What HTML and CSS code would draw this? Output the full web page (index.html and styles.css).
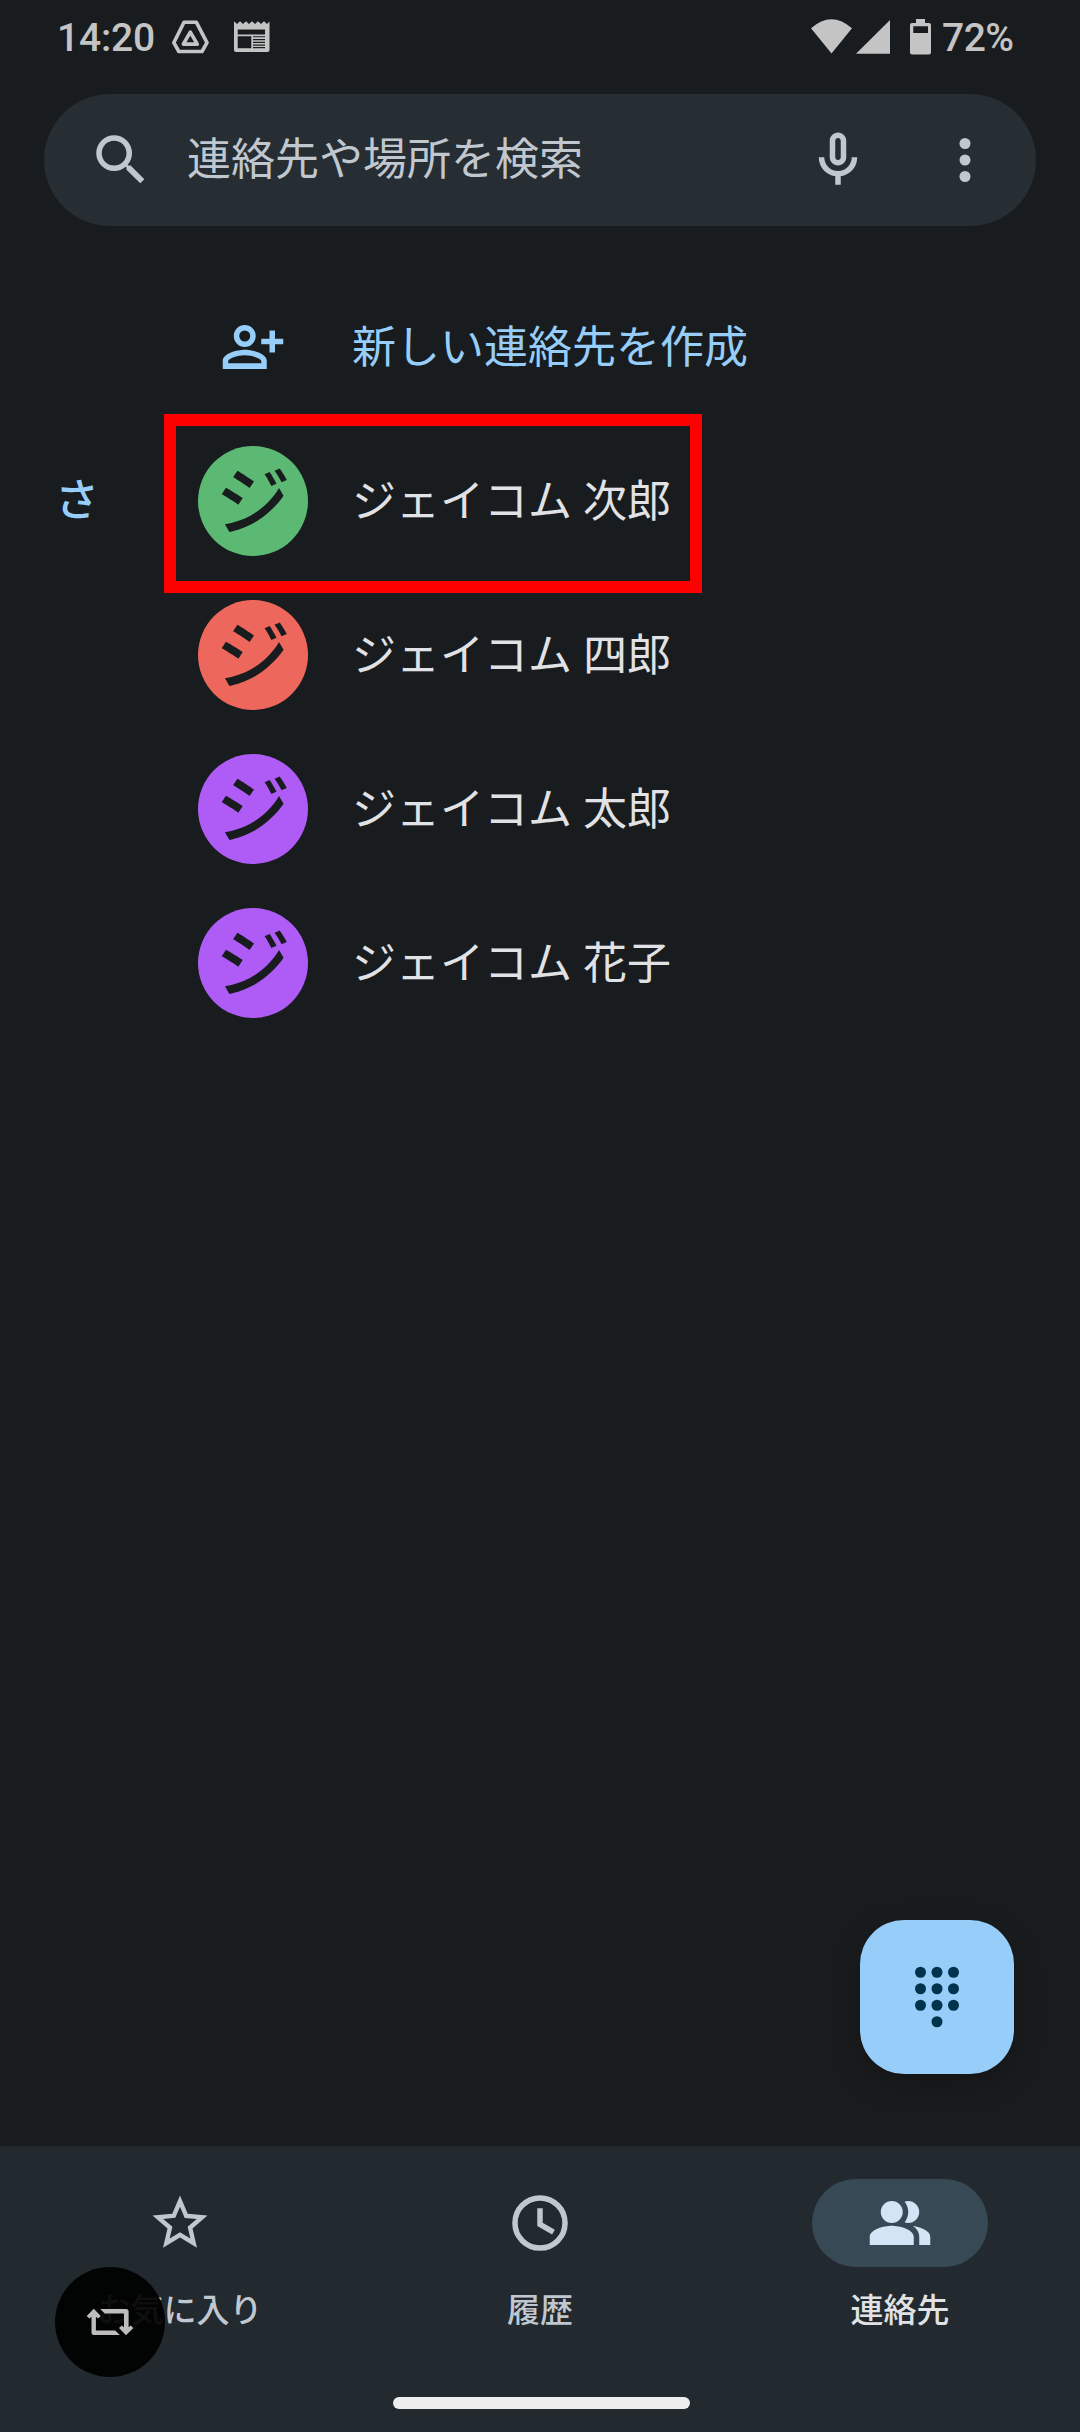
FILE: index.html
```html
<!DOCTYPE html>
<html lang="ja">
<head>
<meta charset="utf-8">
<title>連絡先</title>
<link rel="stylesheet" href="styles.css">
</head>
<body>
<div class="screen">
  <header class="status">
    <span class="clock">14:20</span>
    <svg class="drive" width="38" height="34" viewBox="171 19.5 38 34" fill="none" stroke="currentColor" stroke-width="3.6" stroke-linejoin="round"><path d="M184 21.8h12.4L207 42.2l-5 8.8h-23.2l-5-8.8z"/><path d="M190.3 31.6l7 12h-14z"/></svg>
    <svg class="news" width="36" height="32" viewBox="234 21 36 32"><path fill="currentColor" fill-rule="evenodd" d="M234 21.2l3 2.8 3-2.8 3 2.8 3-2.8 3 2.8 3-2.8 3 2.8 3-2.8 3 2.8 3-2.8 3 2.8 2.500-2.600V50q0 2-2 2h-31.500q-2 0-2-2zM237.700 29.500v5h27.300v-5zM237.700 36.200v12.100h13.600V36.200zM253 36.200v1.100h12v-1.100zM253 38.900v1.300h12v-1.300zM253 41.700v1.300h12v-1.300zM253 44.400v1.300h12v-1.300zM253 47.100v1.200h12v-1.200z"/></svg>
    <svg class="signals" width="122" height="38" viewBox="810 17 122 38" fill="currentColor"><path d="M811 27.300q20.400-18 41 0L831.500 52.500z"/><path d="M856 52.800h34V19z"/><path fill-rule="evenodd" d="M916 18h9v4h4q2 0 2 2v27.500q0 2-2 2h-17q-2 0-2-2V24q0-2 2-2h4zM913.300 25.300v6.700h14.700v-6.700z"/></svg>
    <span class="level">72%</span>
  </header>

  <div class="search">
    <svg class="icon" viewBox="0 0 24 24"><path d="M15.500 14h-.79l-.28-.27A6.470 6.470 0 0 0 16 9.500 6.500 6.500 0 1 0 9.500 16c1.610 0 3.090-.59 4.230-1.570l.27.28v.79l5 4.990L20.490 19l-4.990-5zm-6 0C7.010 14 5 11.990 5 9.500S7.010 5 9.500 5 14 7.010 14 9.500 11.990 14 9.500 14z"/></svg>
    <span class="query">連絡先や場所を検索</span>
    <svg class="icon" viewBox="0 0 24 24"><path d="M12 14c1.660 0 3-1.340 3-3V5c0-1.660-1.340-3-3-3S9 3.340 9 5v6c0 1.660 1.340 3 3 3zm-1-9c0-.55.45-1 1-1s1 .45 1 1v6c0 .55-.45 1-1 1s-1-.45-1-1V5zm6 6c0 2.760-2.240 5-5 5s-5-2.240-5-5H5c0 3.530 2.610 6.430 6 6.920V21h2v-3.080c3.390-.49 6-3.390 6-6.920h-2z"/></svg>
    <svg class="icon more" viewBox="0 0 24 24"><circle cx="12" cy="6" r="2"/><circle cx="12" cy="12" r="2"/><circle cx="12" cy="18" r="2"/></svg>
  </div>

  <main class="list">
    <div class="row create">
      <svg class="icon" viewBox="0 0 24 24"><path fill-rule="evenodd" d="M9 4a4 4 0 1 0 0 8 4 4 0 0 0 0-8zm0 2a2 2 0 1 1 0 4 2 2 0 0 1 0-4zM1 20v-3c0-2.660 5.330-4 8-4s8 1.340 8 4v3zm2-2.100h12V17c0-.64-3.130-2-6-2s-6 1.360-6 2zM18 6h2v3h3v2h-3v3h-2v-3h-3V9h3z"/></svg>
      <span class="name">新しい連絡先を作成</span>
    </div>
    <div class="row marked">
      <span class="initial">さ</span>
      <span class="avatar green">ジ</span>
      <span class="name">ジェイコム 次郎</span>
    </div>
    <div class="row">
      <span class="avatar red">ジ</span>
      <span class="name">ジェイコム 四郎</span>
    </div>
    <div class="row">
      <span class="avatar purple">ジ</span>
      <span class="name">ジェイコム 太郎</span>
    </div>
    <div class="row">
      <span class="avatar purple">ジ</span>
      <span class="name">ジェイコム 花子</span>
    </div>
  </main>

  <div class="fab">
    <svg class="icon" viewBox="0 0 24 24"><circle cx="6" cy="3" r="2"/><circle cx="12" cy="3" r="2"/><circle cx="18" cy="3" r="2"/><circle cx="6" cy="9" r="2"/><circle cx="12" cy="9" r="2"/><circle cx="18" cy="9" r="2"/><circle cx="6" cy="15" r="2"/><circle cx="12" cy="15" r="2"/><circle cx="18" cy="15" r="2"/><circle cx="12" cy="21" r="2"/></svg>
  </div>

  <nav class="nav">
    <div class="tab">
      <span class="pill"><svg class="icon" viewBox="0 0 24 24"><path d="M22 9.240l-7.190-.62L12 2 9.190 8.630 2 9.240l5.460 4.730L5.820 21 12 17.270 18.180 21l-1.630-7.030L22 9.240zM12 15.400l-3.760 2.270 1-4.280-3.320-2.880 4.380-.38L12 6.100l1.710 4.040 4.380.38-3.320 2.880 1 4.280L12 15.400z"/></svg></span>
      <span class="label">お気に入り</span>
    </div>
    <div class="tab">
      <span class="pill"><svg class="icon line" viewBox="0 0 24 24"><circle cx="12" cy="12" r="9.100"/><path d="M12 6.600v5.900l4.900 2.850"/></svg></span>
      <span class="label">履歴</span>
    </div>
    <div class="tab active">
      <span class="pill"><svg class="icon" viewBox="0 0 24 24"><path d="M16.670 13.130C18.040 14.060 19 15.320 19 17v3h4v-3c0-2.180-3.570-3.470-6.330-3.870zM15 12c2.210 0 4-1.790 4-4s-1.790-4-4-4c-.47 0-.91.1-1.330.24C14.500 5.270 15 6.580 15 8s-.5 2.730-1.330 3.760c.42.140.86.240 1.330.240zM9 4a4 4 0 1 0 0 8 4 4 0 0 0 0-8zM9 13c-2.670 0-8 1.340-8 4v3h16v-3c0-2.660-5.330-4-8-4z"/></svg></span>
      <span class="label">連絡先</span>
    </div>
    <div class="handle"></div>
    <div class="bubble">
      <svg width="48" height="28" viewBox="86.500 2308.500 48 28" fill="currentColor"><path d="M94.300 2309.300l7 7.200-2.800 2.500-2.100-1.700v13.700h19.300l4.600 4.500H94.500q-2.500 0-2.500-2.500v-15.700l-2.100 1.700-2.700-2.500z"/><path d="M126.500 2335.700l-7-7.200 2.800-2.500 2.200 1.700v-13.700h-19.200l-4.600-4.500h25.900q2.500 0 2.500 2.500v15.700l2.100-1.700 2.700 2.500z"/></svg>
    </div>
  </nav>
</div>
</body>
</html>
```
FILE: styles.css
```css
*,
*::after {
  box-sizing: border-box;
}

body {
  margin: 0;
  background: #191c1e;
  font-family: Roboto, "Noto Sans CJK JP", sans-serif;
}

.screen {
  position: relative;
  display: flex;
  flex-direction: column;
  width: 1080px;
  height: 2432px;
}

.icon {
  flex: none;
  display: block;
  width: 66px;
  height: 66px;
  fill: currentColor;
}

.icon.line {
  fill: none;
  stroke: currentColor;
  stroke-width: 2;
}

.status {
  display: flex;
  align-items: center;
  height: 94px;
  padding: 0 66px 20px 57px;
  color: #c4c4c4;
  font-size: 39px;
  font-weight: 500;
  line-height: 46px;
}

.clock {
  width: 114px;
  padding-top: 2px;
  letter-spacing: -0.2px;
}

.news {
  margin-left: 25px;
}

.signals {
  margin-left: auto;
}

.level {
  width: 72px;
  margin-left: 10px;
  padding-top: 2px;
  letter-spacing: -0.5px;
}

.search {
  display: flex;
  align-items: center;
  height: 132px;
  margin: 0 44px;
  padding: 0 38px 0 44px;
  border-radius: 66px;
  background: #262d33;
  color: #c0c7cf;
}

.query {
  flex: 1;
  margin-left: 33px;
  font-size: 44px;
  line-height: 60px;
}

.more {
  margin-left: 61px;
}

.list {
  padding-top: 44px;
}

.row {
  position: relative;
  display: flex;
  align-items: center;
  height: 154px;
  padding-left: 198px;
  color: #e1e2e5;
}

.name {
  margin-left: 44px;
  padding-top: 2px;
  font-size: 44px;
  line-height: 60px;
}

.create {
  padding-left: 220px;
  color: #96cdf9;
}

.create .name {
  margin-left: 66px;
}

.marked {
  padding-left: 55px;
}

.marked::after {
  content: "";
  position: absolute;
  left: 164px;
  top: -10px;
  width: 538px;
  height: 179px;
  border: 12px solid #f00;
}

.initial {
  width: 143px;
  color: #96cdf9;
  font-size: 44px;
  font-weight: 500;
  line-height: 60px;
}

.avatar {
  display: flex;
  align-items: center;
  justify-content: center;
  width: 110px;
  height: 110px;
  padding-top: 4px;
  border-radius: 50%;
  color: #191c1e;
  font-size: 75px;
  font-weight: 500;
  line-height: 106px;
}

.green { background: #5cb974; }
.red { background: #ee675c; }
.purple { background: #af5cf7; }

.fab {
  display: flex;
  align-items: center;
  justify-content: center;
  width: 154px;
  height: 154px;
  margin: auto 66px 72px auto;
  border-radius: 44px;
  background: #96cdf9;
  box-shadow: 0 10px 24px rgba(20, 16, 16, 0.6);
  color: #00344c;
}

.nav {
  position: relative;
  display: flex;
  height: 286px;
  padding-top: 33px;
  background: #22292f;
  color: #c0c7cf;
}

.tab {
  display: flex;
  flex: 1;
  flex-direction: column;
  align-items: center;
}

.pill {
  display: flex;
  align-items: center;
  justify-content: center;
  width: 176px;
  height: 88px;
  border-radius: 44px;
}

.label {
  margin-top: 22px;
  font-size: 33px;
  font-weight: 500;
  line-height: 44px;
}

.active .pill {
  background: #374955;
  color: #d3e5f5;
}

.active .label {
  color: #e1e2e5;
}

.handle {
  position: absolute;
  left: 393px;
  top: 251px;
  width: 297px;
  height: 12px;
  border-radius: 6px;
  background: #eee;
}

.bubble {
  position: absolute;
  left: 55px;
  top: 121px;
  display: flex;
  align-items: center;
  justify-content: center;
  width: 110px;
  height: 110px;
  border-radius: 50%;
  background: rgba(0, 0, 0, 0.93);
  color: #bdbdbd;
}
```
